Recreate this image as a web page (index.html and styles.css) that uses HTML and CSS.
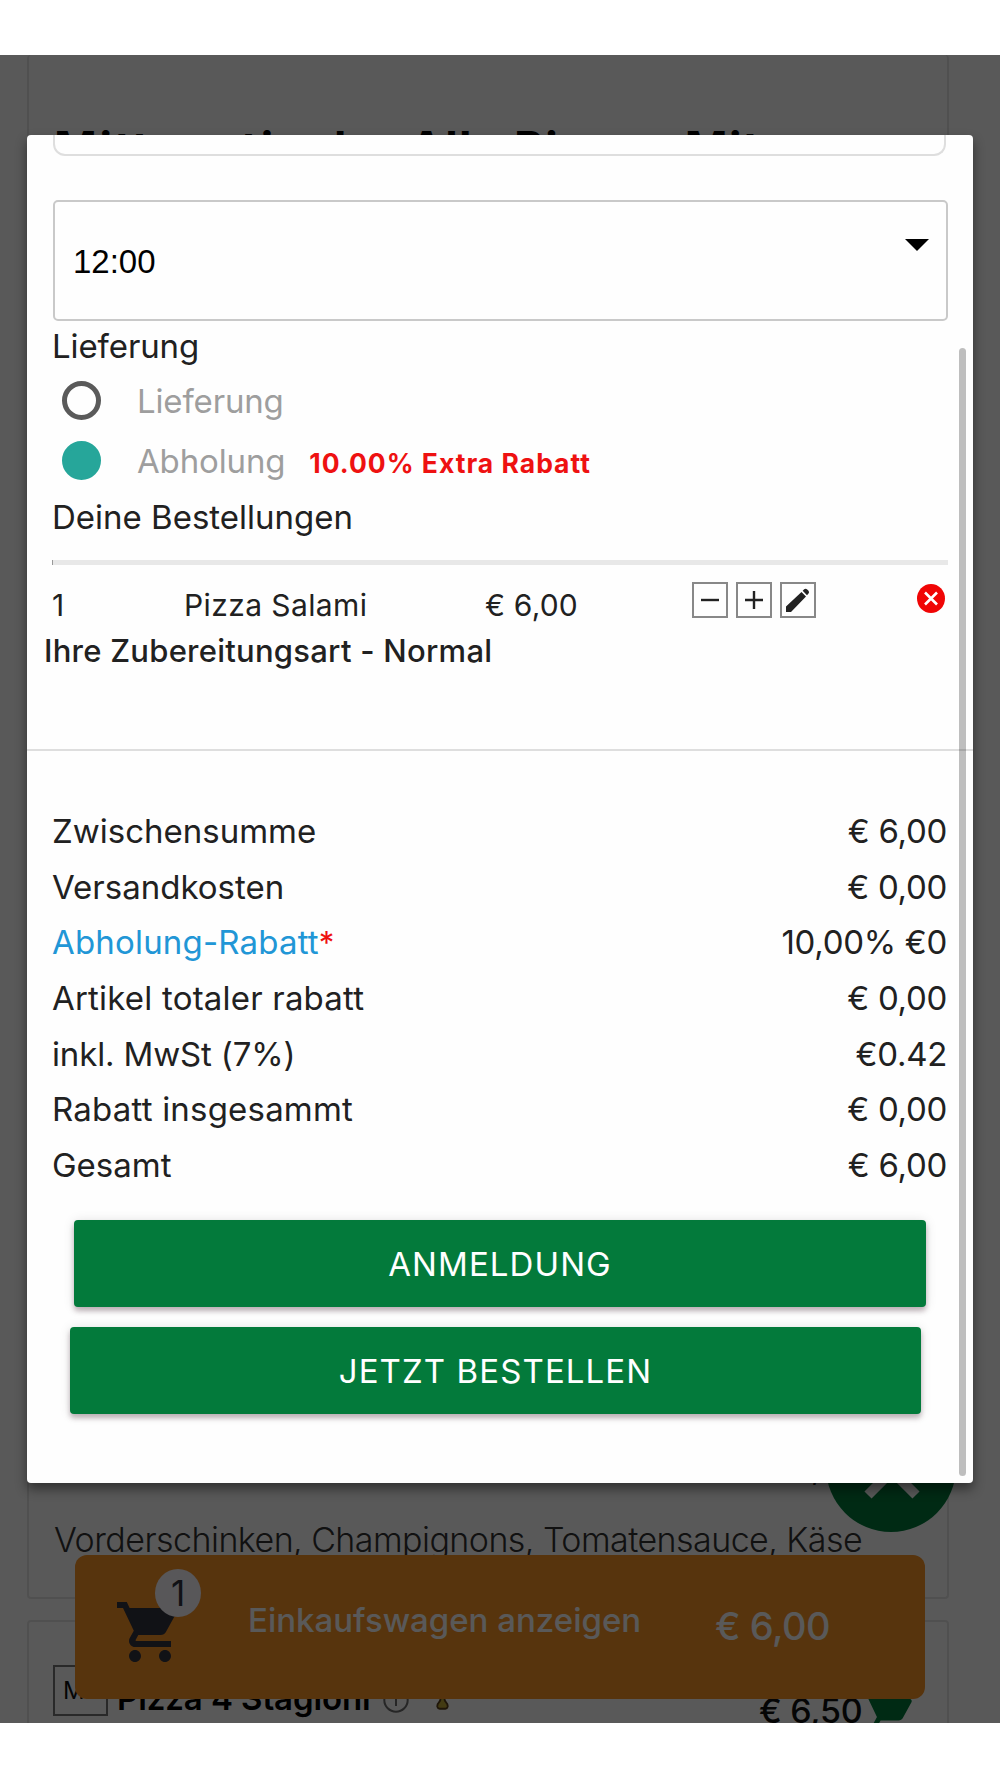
FILE: index.html
```html
<!DOCTYPE html>
<html lang="de">
<head>
<meta charset="utf-8">
<title>Warenkorb</title>
<link rel="stylesheet" href="styles.css">
</head>
<body>
<div class="screen">
  <main class="menu">
    <section class="card card-first">
      <h2 class="card-title"><span class="title-lead">Mittagstisch:</span> Alle Pizzen Mit</h2>
      <p class="card-more">,</p>
      <p class="card-text">Vorderschinken, Champignons, Tomatensauce, Käse</p>
    </section>
    <section class="card card-second">
      <span class="code">M.</span>
      <span class="dish">Pizza 4 Stagioni</span>
      <svg class="info" viewBox="0 0 26 26"><circle cx="13" cy="13" r="11.7" fill="none" stroke="#6d6d6d" stroke-width="2"/><path d="M13 11v8M13 6v2" stroke="#6d6d6d" stroke-width="2"/></svg>
      <svg class="flask" viewBox="0 0 14 24"><path d="M5 1h4v10q0 3 2 5 2 2 1.500 4.500-.5 2-2.500 2H4q-2 0-2.500-2Q1 18 3 16q2-2 2-5z" fill="#c0a838" stroke="#5a401c" stroke-width="2"/></svg>
      <span class="dish-price">€ 6,50</span>
      <svg class="add" viewBox="0 0 24 24"><path fill="#007a3a" d="M7 18c-1.100 0-1.990.9-1.990 2S5.900 22 7 22s2-.9 2-2-.9-2-2-2zM1 2v2h2l3.600 7.590-1.350 2.450c-.16.280-.25.610-.25.960 0 1.100.9 2 2 2h12v-2H7.420c-.14 0-.25-.11-.25-.25l.03-.12.9-1.630h7.450c.75 0 1.410-.41 1.750-1.030l3.580-6.490c.08-.14.12-.31.12-.48 0-.55-.45-1-1-1H5.210l-.94-2H1zm16 16c-1.100 0-1.990.9-1.990 2s.89 2 1.990 2 2-.9 2-2-.9-2-2-2z"/></svg>
    </section>
  </main>

  <div class="fab">
    <svg viewBox="0 0 60 60"><path d="M6 6L54 54M54 6L6 54" stroke="#fff" stroke-width="10"/></svg>
  </div>

  <div class="cartbar">
    <div class="cart">
      <svg viewBox="0 0 24 24"><path fill="#33343f" d="M7 18c-1.100 0-1.990.9-1.990 2S5.900 22 7 22s2-.9 2-2-.9-2-2-2zM1 2v2h2l3.600 7.590-1.350 2.450c-.16.280-.25.610-.25.960 0 1.100.9 2 2 2h12v-2H7.420c-.14 0-.25-.11-.25-.25l.03-.12.9-1.630h7.450c.75 0 1.410-.41 1.750-1.030l3.580-6.490c.08-.14.12-.31.12-.48 0-.55-.45-1-1-1H5.210l-.94-2H1zm16 16c-1.100 0-1.990.9-1.990 2s.89 2 1.990 2 2-.9 2-2-.9-2-2-2z"/></svg>
      <span class="badge">1</span>
    </div>
    <span class="cart-label">Einkaufswagen anzeigen</span>
    <span class="cart-price">€ 6,00</span>
  </div>

  <div class="overlay"></div>

  <div class="modal">
    <div class="field-end"></div>
    <div class="select">
      <span>12:00</span>
      <svg class="caret" viewBox="0 0 24 12"><path d="M0 0h24L12 12z"/></svg>
    </div>
    <p class="heading h-delivery">Lieferung</p>
    <div class="radio"><i class="dot"></i><span class="radio-label">Lieferung</span></div>
    <div class="radio"><i class="dot on"></i><span class="radio-label">Abholung</span><b class="extra">10.00% Extra Rabatt</b></div>
    <p class="heading h-orders">Deine Bestellungen</p>
    <div class="rule"></div>
    <div class="item">
      <span class="qty">1</span>
      <span class="name">Pizza Salami</span>
      <span class="price">€ 6,00</span>
      <div class="tools">
        <button class="tool"><svg viewBox="0 0 32 32"><path d="M7 16h18" stroke="#222" stroke-width="2.400"/></svg></button>
        <button class="tool"><svg viewBox="0 0 32 32"><path d="M7 16h18M16 7v18" stroke="#222" stroke-width="2.400"/></svg></button>
        <button class="tool"><svg viewBox="0 0 32 32"><path fill="#222" d="M4 28v-5.500L19.500 8l4.500 4.500L9 28zM20.700 6.700l1.500-1.500q1.500-1.200 3 .2l1.300 1.400q1.200 1.400 0 2.800l-1.500 1.600z"/></svg></button>
      </div>
      <svg class="remove" viewBox="0 0 28 29"><ellipse cx="14" cy="14.500" rx="14" ry="14.500" fill="#f00505"/><path d="M8 8.500l12 12M20 8.500l-12 12" stroke="#fff" stroke-width="2.600"/></svg>
    </div>
    <p class="note">Ihre Zubereitungsart - Normal</p>
    <div class="divider"></div>
    <dl class="totals">
      <div><dt>Zwischensumme</dt><dd>€ 6,00</dd></div>
      <div><dt>Versandkosten</dt><dd>€ 0,00</dd></div>
      <div><dt class="link">Abholung-Rabatt<em>*</em></dt><dd>10,00% €0</dd></div>
      <div><dt class="loose">Artikel totaler rabatt</dt><dd>€ 0,00</dd></div>
      <div><dt class="tight">inkl. MwSt (7%)</dt><dd>€0.42</dd></div>
      <div><dt class="loose">Rabatt insgesammt</dt><dd>€ 0,00</dd></div>
      <div><dt>Gesamt</dt><dd>€ 6,00</dd></div>
    </dl>
    <button class="btn btn-login">ANMELDUNG</button>
    <button class="btn btn-order">JETZT BESTELLEN</button>
    <div class="scrollbar"></div>
  </div>
</div>
</body>
</html>
```
FILE: styles.css
```css
* { box-sizing: border-box; }
body {
  margin: 0;
  background: #fff;
  font-family: Inter, "Liberation Sans", sans-serif;
  color: #212121;
}
p, h2, dl, dd { margin: 0; }
button { font-family: inherit; padding: 0; }
svg { display: block; }

.screen {
  position: relative;
  height: 1668px;
  margin-top: 55px;
  overflow: hidden;
  background: #fff;
}

/* menu behind the dialog */
.menu { padding-left: 27px; width: 949px; }
.card { border: 2px solid #e6e6e6; border-radius: 4px; white-space: nowrap; }
.card-first { height: 1544px; border-top: 0; padding-left: 25px; }
.card-title {
  padding-top: 65px;
  font-size: 46px;
  line-height: 56px;
  font-weight: 700;
  letter-spacing: 1.400px;
  color: #000;
}
.title-lead { letter-spacing: 2.600px; margin-right: 14px; }
.card-more {
  margin-top: 1268px;
  padding-left: 757px;
  font-size: 34px;
  line-height: 46px;
}
.card-text {
  margin-top: 25px;
  font-size: 34px;
  line-height: 50px;
  font-weight: 300;
  letter-spacing: -.550px;
  color: #333;
}
.card-second {
  height: 200px;
  margin-top: 21px;
  padding: 43px 0 0 24px;
  display: flex;
  align-items: flex-start;
}
.code {
  width: 55px;
  height: 51px;
  border: 2px solid #777;
  padding-left: 8px;
  font-size: 24px;
  line-height: 47px;
  color: #111;
}
.dish { width: 275px; padding-left: 9px; margin-top: 13px; font-size: 33px; line-height: 40px; font-weight: 600; letter-spacing: -.1px; color: #000; }
.info { width: 26px; height: 26px; margin-top: 22px; }
.flask { width: 13px; height: 24px; margin: 22px 0 0 27px; }
.dish-price { width: 112px; margin: 25px 0 0 310px; font-size: 34px; line-height: 42px; font-weight: 500; letter-spacing: -.3px; color: #111; }
.add { width: 58px; height: 58px; margin: 24px 0 0 -10px; flex: none; }

.fab {
  position: absolute;
  left: 826px;
  top: 1347px;
  width: 130px;
  height: 130px;
  border-radius: 50%;
  background: #007a3a;
  display: flex;
  align-items: center;
  justify-content: center;
}
.fab svg { width: 60px; height: 60px; margin: 8px 0 0 2px; }

.cartbar {
  position: absolute;
  left: 75px;
  top: 1500px;
  width: 850px;
  height: 144px;
  border-radius: 12px;
  background: #fa9426;
  color: #fff;
  display: flex;
  align-items: flex-start;
  white-space: nowrap;
}
.cart { position: relative; width: 173px; padding: 41px 0 0 39px; }
.cart svg { width: 72px; height: 72px; }
.badge {
  position: absolute;
  left: 80px;
  top: 14px;
  width: 46px;
  height: 48px;
  border-radius: 50%;
  background: #fbf8ff;
  color: #33343f;
  font-size: 35px;
  line-height: 48px;
  text-align: center;
}
.cart-label { width: 467px; margin-top: 45px; font-size: 33px; line-height: 40px; font-weight: 500; }
.cart-price { margin-top: 48px; font-size: 38px; line-height: 46px; font-weight: 500; letter-spacing: -.5px; }

.overlay { position: absolute; inset: 0; background: rgba(0, 0, 0, .65); }

/* cart dialog */
.modal {
  position: absolute;
  left: 27px;
  top: 80px;
  width: 946px;
  height: 1348px;
  border-radius: 4px;
  background: #fefefe;
  overflow: hidden;
  white-space: nowrap;
  box-shadow: 0 6px 12px rgba(0, 0, 0, .45);
}
.field-end {
  height: 21px;
  margin: 0 27px 0 26px;
  border: 2px solid #dedede;
  border-top: 0;
  border-radius: 0 0 12px 12px;
}
.select {
  display: flex;
  justify-content: space-between;
  height: 121px;
  margin: 44px 25px 0 26px;
  padding: 0 17px 0 18px;
  border: 2px solid #c9c9c9;
  border-radius: 5px;
  font: 33px/119px "Liberation Sans", sans-serif;
  color: #000;
}
.caret { width: 24px; height: 12px; margin-top: 37px; }
.heading { padding-left: 25px; font-size: 33px; line-height: 40px; }
.h-delivery { margin-top: 5px; letter-spacing: -.1px; }
.radio { display: flex; align-items: center; height: 60.500px; padding-left: 35px; }
.h-delivery + .radio { margin-top: 4px; }
.dot { width: 39px; height: 39px; border: 5px solid #5a5a5a; border-radius: 50%; margin-right: 36px; }
.dot.on { background: #26a69a; border-color: #26a69a; }
.radio-label { font-size: 33px; color: #9e9e9e; letter-spacing: -.150px; margin-top: 1px; }
.extra { margin: 5px 0 0 24px; font-size: 26.500px; font-weight: 700; color: #ee1111; letter-spacing: 1px; }
.h-orders { margin-top: 6px; }
.rule { height: 5px; margin: 23px 25px 0; background: #e8e8e8; border-left: 1px solid #999; }
.item { display: flex; height: 68px; padding: 17px 28px 0 25px; font-size: 30px; line-height: 44px; }
.qty { width: 132px; }
.name { width: 301px; letter-spacing: .4px; }
.price { width: 207px; letter-spacing: .2px; }
.item > span { padding-top: 1px; }
.tools { display: flex; gap: 8px; }
.tool { width: 36px; height: 36px; border: 2px solid #888; background: none; }
.remove { width: 28px; height: 29px; margin: 2px 0 0 auto; }
.note { margin-top: -2px; padding-left: 17px; font-size: 31px; line-height: 40px; font-weight: 500; letter-spacing: .250px; }
.divider { height: 2px; margin-top: 78px; background: #dedede; }
.totals { margin-top: 53px; padding: 0 26px 0 25px; font-size: 33px; }
.totals div { display: flex; justify-content: space-between; height: 55.700px; line-height: 55.700px; }
.totals dd { letter-spacing: -.3px; }
.loose { letter-spacing: .2px; }
.tight { letter-spacing: -.150px; }
.link { color: #2196d6; letter-spacing: .180px; }
.link em { font-style: normal; font-size: 31px; color: #ee1111; }
.btn {
  display: block;
  height: 87px;
  border: 0;
  border-radius: 4px;
  background: #037a3b;
  color: #fff;
  font-size: 33px;
  font-weight: 400;
  letter-spacing: 1.100px;
  box-shadow: 0 4px 5px rgba(60, 20, 40, .28), 0 1px 12px rgba(0, 0, 0, .12);
}
.btn-login { width: 852px; margin: 26px 0 0 47px; padding-top: 1px; }
.btn-order { width: 851px; margin: 20px 0 0 43px; padding-top: 1px; }
.scrollbar {
  position: absolute;
  right: 7px;
  top: 213px;
  width: 7px;
  height: 1128px;
  border-radius: 4px;
  background: rgba(0, 0, 0, .25);
}
```
